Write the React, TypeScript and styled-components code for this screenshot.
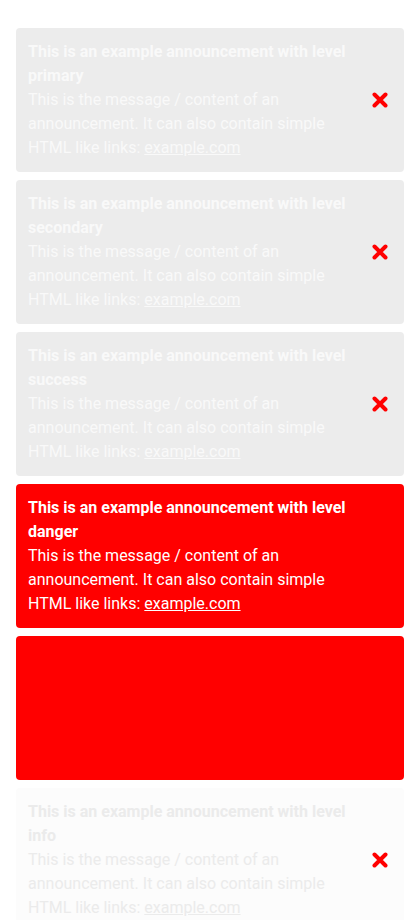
import React from "react";
import styled, { createGlobalStyle } from "styled-components";

const Global = createGlobalStyle`
  html, body { margin: 0; padding: 0; background: #ffffff; }
  body { font-family: Roboto, "Liberation Sans", sans-serif; }
`;

type Level = "primary" | "secondary" | "success" | "danger" | "warning" | "info";

const palette: Record<Level, { bg: string; fg: string }> = {
  primary: { bg: "#ececec", fg: "#f9f9f9" },
  secondary: { bg: "#ececec", fg: "#f9f9f9" },
  success: { bg: "#ececec", fg: "#f9f9f9" },
  danger: { bg: "#ff0000", fg: "#ffffff" },
  warning: { bg: "#ff0000", fg: "#ff0000" },
  info: { bg: "#fcfcfc", fg: "#ebebeb" },
};

const List = styled.div`
  display: flex;
  flex-direction: column;
  gap: 8px;
  padding: 28px 16px;
`;

const Card = styled.div<{ $level: Level }>`
  display: flex;
  align-items: center;
  gap: 12px;
  padding: 12px 16px 12px 12px;
  border-radius: 4px;
  background: ${(p) => palette[p.$level].bg};
  color: ${(p) => palette[p.$level].fg};
  font-size: 16px;
  line-height: 24px;
`;

const Body = styled.div`
  flex: 1;
  min-width: 0;
`;

const Title = styled.div`
  font-weight: 700;
`;

const Message = styled.div`
  font-weight: 400;
`;

const Link = styled.a`
  color: inherit;
  text-decoration: underline;
`;

const Close = styled.button`
  flex: none;
  width: 16px;
  height: 16px;
  padding: 0;
  border: 0;
  background: transparent;
  display: flex;
  align-items: center;
  justify-content: center;
  cursor: pointer;
`;

const levels: Level[] = ["primary", "secondary", "success", "danger", "warning", "info"];

const CloseIcon = () => (
  <svg width="16" height="16" viewBox="0 0 16 16">
    <path d="M2.5 2.5 L13.5 13.5 M13.5 2.5 L2.5 13.5" stroke="#ff0000" strokeWidth="4" strokeLinecap="round" fill="none" />
  </svg>
);

export default function App() {
  return (
    <>
      <Global />
      <List>
        {levels.map((l) => (
          <Card key={l} $level={l}>
            <Body>
              <Title>This is an example announcement with level {l}</Title>
              <Message>
                This is the message / content of an announcement. It can also contain simple HTML like links:{" "}
                <Link href="#">example.com</Link>
              </Message>
            </Body>
            <Close aria-label="Close">
              <CloseIcon />
            </Close>
          </Card>
        ))}
      </List>
    </>
  );
}
